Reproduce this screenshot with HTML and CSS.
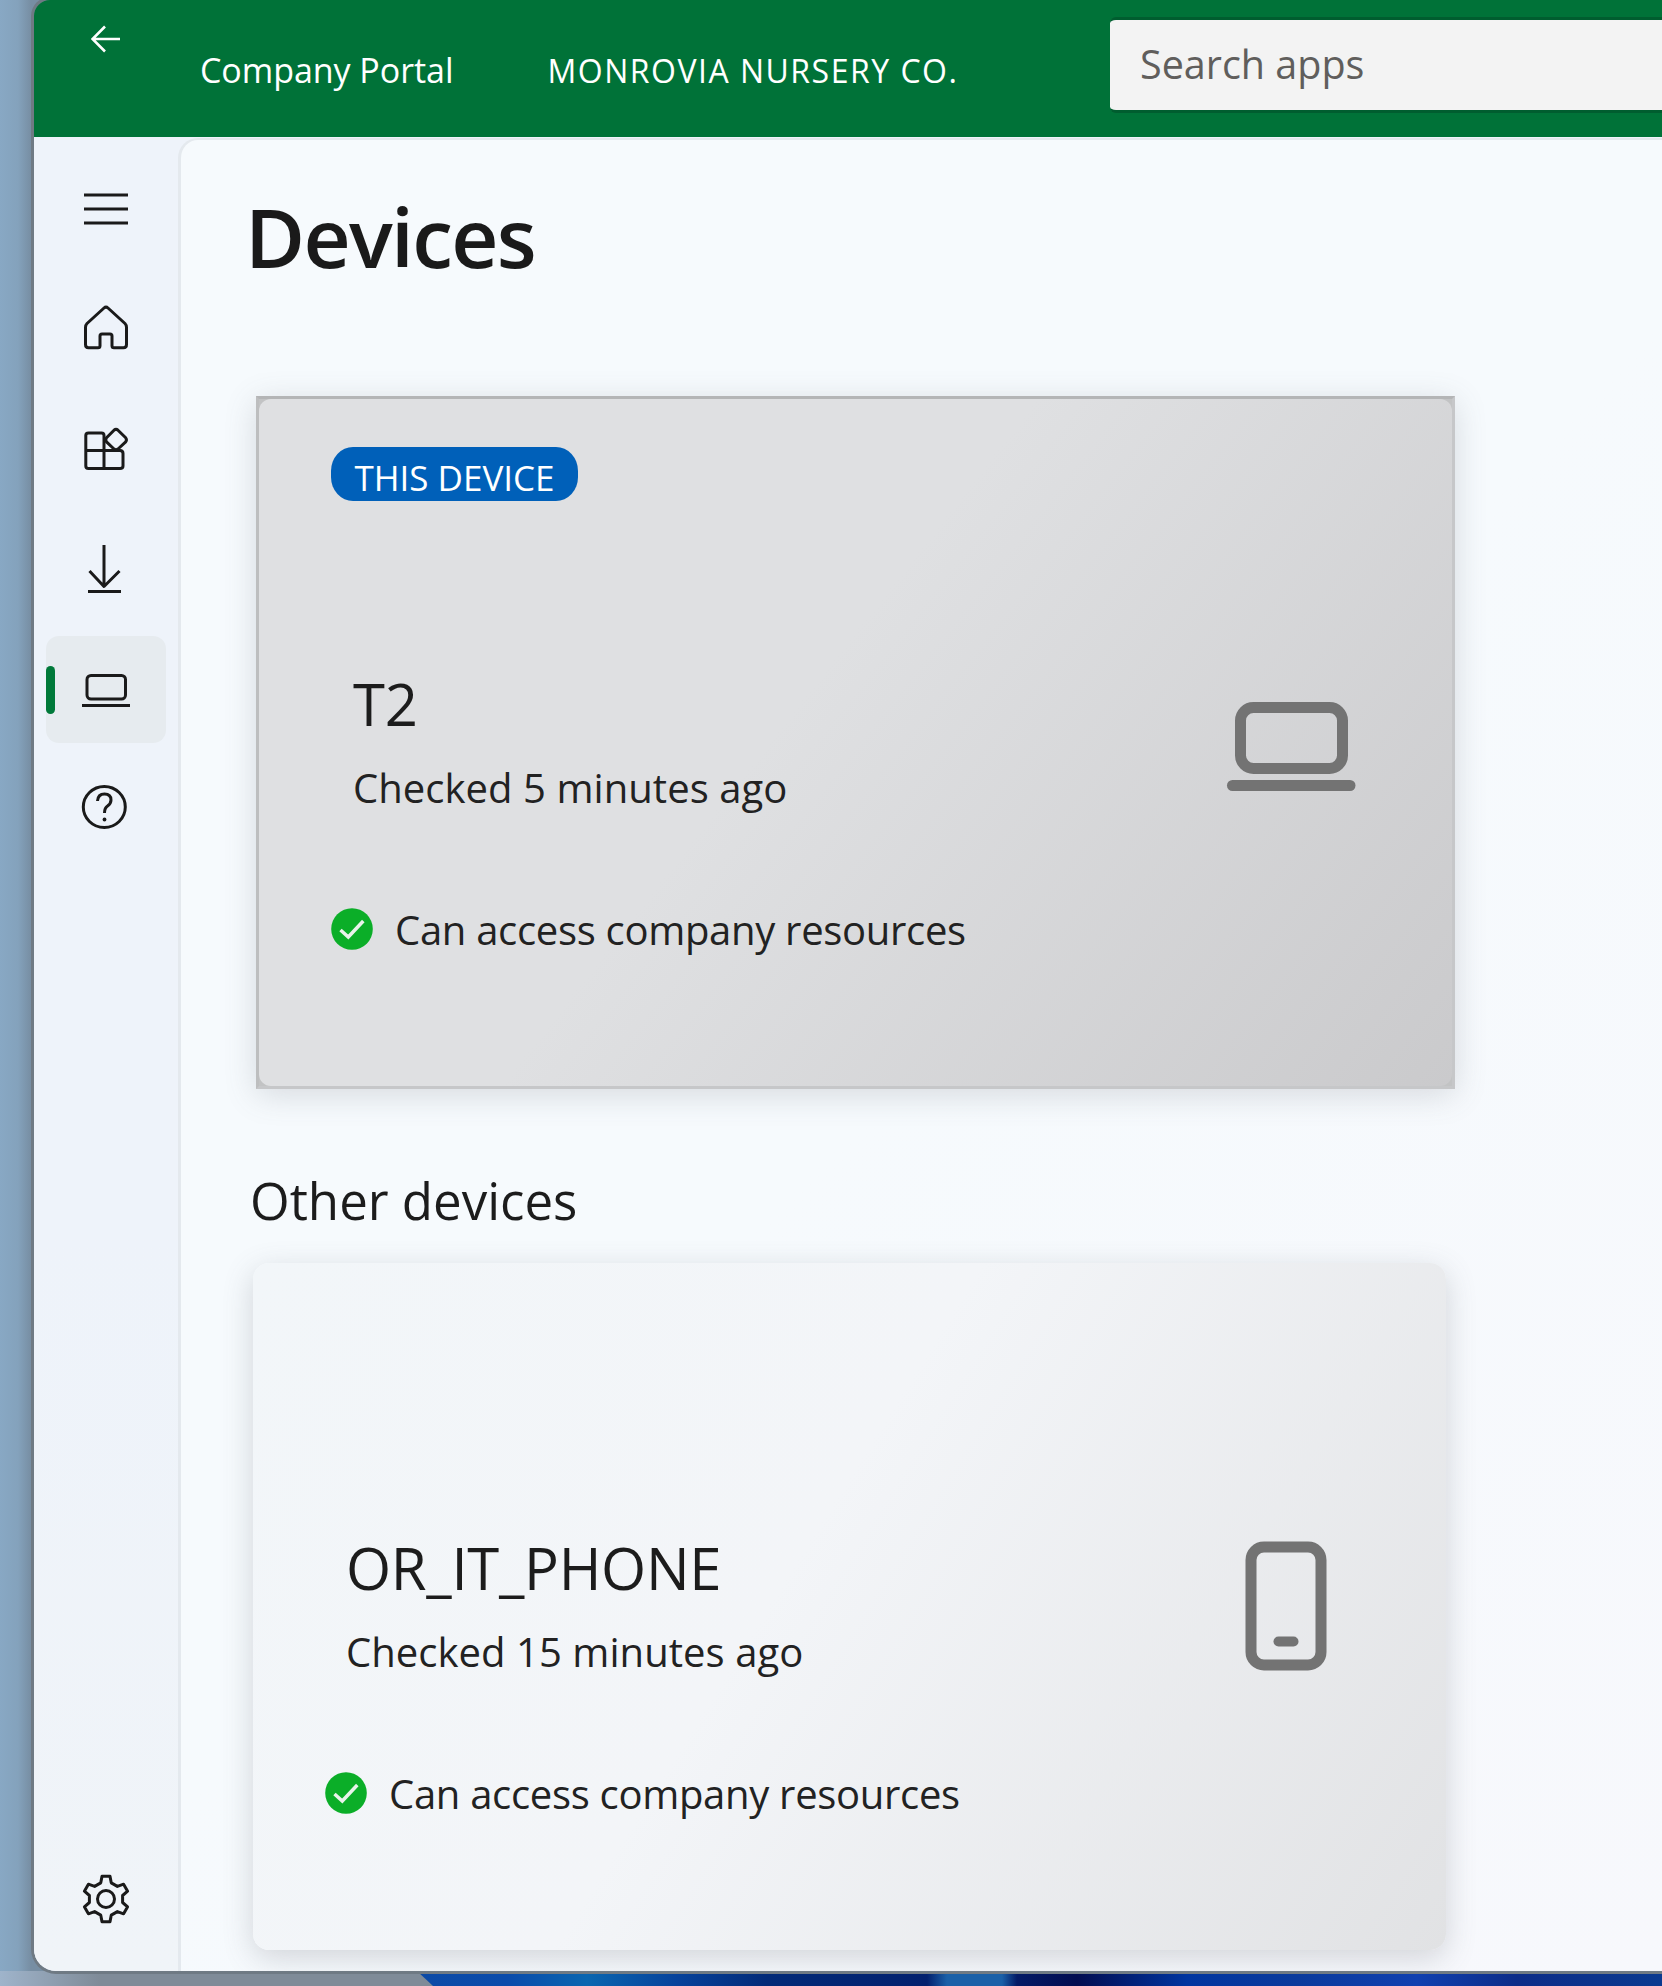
FILE: index.html
```html
<!DOCTYPE html>
<html lang="en">
<head>
<meta charset="utf-8">
<title>Company Portal - Devices</title>
<link rel="stylesheet" href="styles.css">
</head>
<body>
<div class="desktop">
  <div class="window">
    <header class="topbar">
      <svg class="back" viewBox="0 0 30 28"><path d="M29 14H2M14 1.5 1.5 14 14 26.5"/></svg>
      <span class="app-name">Company Portal</span>
      <span class="org-name">MONROVIA NURSERY CO.</span>
      <div class="search"><span class="search-text">Search apps</span></div>
    </header>
    <div class="body-row">
      <nav class="nav">
        <a class="nav-item"><svg class="nav-icon" viewBox="0 0 48 48"><path d="M2 10h44M2 24h44M2 38h44"/></svg></a>
        <a class="nav-item"><svg class="nav-icon" viewBox="0 0 48 48"><path d="M22 3Q24 1.200 26 3L43 18.500Q44.500 20 44.500 22.500V39.500Q44.500 42.800 41.500 42.800H32Q30 42.800 30 40.800V31Q30 29 28 29H20Q18 29 18 31V40.800Q18 42.800 16 42.800H6.500Q3.500 42.800 3.500 39.500V22.500Q3.500 20 5 18.500Z"/></svg></a>
        <a class="nav-item"><svg class="nav-icon" viewBox="0 0 48 48"><path d="M22 25.500V10.500Q22 8 19.500 8H6.500Q3.800 8 3.800 10.500V41Q3.800 43.500 6.500 43.500H38Q41 43.500 41 41V28.500Q41 25.500 38 25.500H3.800M22 25.500V43.500"/><path d="M32 5.200Q34 3.500 36 5.200L43.700 12.800Q45.200 14.800 43.700 16.800L36 24Q34 25.700 32 24L24.500 16.800Q23 14.800 24.500 12.800Z"/></svg></a>
        <a class="nav-item"><svg class="nav-icon" viewBox="0 0 48 48"><path d="M22 0V41M7.500 26 22 41.500 37.500 26M6 46.500H39"/></svg></a>
        <a class="nav-item nav-active"><span class="nav-pill"></span><svg class="nav-icon" viewBox="0 0 48 48"><rect x="5" y="10.500" width="38.500" height="23.500" rx="4"/><path d="M0 40.500H48"/></svg></a>
        <a class="nav-item"><svg class="nav-icon" viewBox="0 0 48 48"><ellipse cx="22.300" cy="22" rx="21" ry="20.500"/><path d="M15.500 16Q16 9 22.500 9 29 9 29 15 29 18.500 25.500 21 22.500 23 22.500 28"/><circle class="dot" cx="22.500" cy="34.500" r="1.900"/></svg></a>
        <a class="nav-item nav-bottom"><svg class="nav-icon" viewBox="0 0 48 48"><path d="M18.750 7.830 20 1.350H28L29.250 7.830 35.400 11.400 41.600 9.200 45.600 16.130 40.600 20.500V27.500L45.600 31.870 41.600 38.800 35.400 36.600 29.250 40.170 28 46.650H20L18.750 40.170 12.600 36.600 6.400 38.800 2.400 31.870 7.400 27.500V20.500L2.400 16.130 6.400 9.200 12.600 11.400Z"/><circle cx="24" cy="24" r="8.500"/></svg></a>
      </nav>
      <main class="content">
        <h1 class="page-title">Devices</h1>
        <section class="card card-current">
          <span class="badge">THIS DEVICE</span>
          <div class="device-row device-row-current">
            <div class="device-text">
              <div class="device-name">T2</div>
              <div class="device-time">Checked 5 minutes ago</div>
            </div>
            <svg class="device-icon" viewBox="0 0 130 130"><rect x="14.500" y="26.500" width="102" height="61" rx="13"/><path d="M6.500 104.500H124"/></svg>
          </div>
          <div class="status status-current">
            <svg class="check" viewBox="0 0 42 42"><circle cx="21" cy="21" r="20.800"/><path d="M9.500 22 17.300 29 32.300 13"/></svg>
            <span class="status-text">Can access company resources</span>
          </div>
        </section>
        <h2 class="section-title">Other devices</h2>
        <section class="card card-other">
          <div class="device-row">
            <div class="device-text device-text-other">
              <div class="device-name">OR_IT_PHONE</div>
              <div class="device-time">Checked 15 minutes ago</div>
            </div>
            <svg class="device-icon device-icon-phone" viewBox="0 0 130 140"><rect x="30" y="7" width="70" height="118" rx="13"/><rect class="bar" x="52.500" y="96.500" width="25" height="10" rx="5"/></svg>
          </div>
          <div class="status status-other">
            <svg class="check" viewBox="0 0 42 42"><circle cx="21" cy="21" r="20.800"/><path d="M9.500 22 17.300 29 32.300 13"/></svg>
            <span class="status-text">Can access company resources</span>
          </div>
        </section>
      </main>
    </div>
  </div>
  <div class="wallpaper"><div class="wall-blue"></div></div>
</div>
</body>
</html>
```
FILE: styles.css
```css
* { box-sizing: border-box; }
html, body { margin: 0; padding: 0; }
body { font-family: "Open Sans", "Noto Sans", sans-serif; color: #1c1c1c; overflow: hidden; }
.desktop {
  width: 1662px; height: 1986px; overflow: hidden;
  display: flex; flex-direction: column;
  background: linear-gradient(90deg, #88a8c4 0, #84a2bc 18px, #778ea3 31px, #778ea3 34px);
}
.window {
  margin-left: 34px; height: 1971px; flex: none;
  display: flex; flex-direction: column;
  border-radius: 16px 0 0 22px;
  box-shadow: 0 0 0 3px #6f7a84;
  position: relative; z-index: 1;
  overflow: hidden;
}
.topbar {
  height: 137px; flex: none; background: #007238;
  display: flex; align-items: flex-start; color: #fff;
}
.back { width: 30px; height: 28px; margin: 25px 0 0 57px; flex: none; fill: none; stroke: #fff; stroke-width: 2.6; }
.app-name { font-size: 34px; line-height: 50px; margin: 45px 0 0 79px; white-space: nowrap; letter-spacing: -.05px; }
.org-name { font-size: 32px; line-height: 50px; margin: 46px 0 0 94px; white-space: nowrap; letter-spacing: 1.5px; }
.search {
  flex: none; width: 552px; height: 96px; margin: 17px 0 0 auto;
  background: #f3f3f3; border-top: 3px solid #005d2f; border-bottom: 3px solid #005d2f;
  border-radius: 6px 0 0 6px; padding: 0 0 2px 30px;
  display: flex; align-items: center;
}
.search-text { font-size: 39.500px; color: #605e5c; }
.body-row { flex: 1; display: flex; background: #eef3fa; min-height: 0; }
.nav {
  width: 144px; flex: none; padding: 18.500px 0 18.500px 12px;
  display: flex; flex-direction: column; gap: 13px;
  background: linear-gradient(180deg, #eef3fa 0, #eef3fa 60%, #f0f4f8 100%);
}
.nav-item {
  width: 120px; height: 107px; flex: none; position: relative;
  display: flex; align-items: center; justify-content: center; border-radius: 13px;
}
.nav-bottom { margin-top: auto; }
.nav-active { background: #e6ebef; }
.nav-pill { position: absolute; left: 0; top: 30px; width: 9px; height: 48px; border-radius: 5px; background: #00793a; }
.nav-icon { width: 48px; height: 48px; fill: none; stroke: #1a1a1a; stroke-width: 3; stroke-linejoin: round; overflow: visible; }
.nav-icon .dot { fill: #1a1a1a; stroke: none; }
.content {
  flex: 1; min-width: 0; background: #f6fafd; margin-top: 1px;
  border-left: 3px solid #e4e9ee; border-top: 2px solid #e4e9ee;
  border-top-left-radius: 20px; overflow: hidden;
  padding: 45px 0 0 0;
  background-image: linear-gradient(135deg, #f6fafd 50%, #f7f8fc 100%);
}
.page-title { margin: 0 0 0 64px; font-size: 82px; line-height: 102px; font-weight: 600; color: #1a1a1a; letter-spacing: -1.700px; }
.card { position: relative; }
.card-current {
  width: 1199px; height: 693px; margin: 109px 0 0 75px; isolation: isolate;
  border: 3px solid #c6c7c9; border-top-color: #b4b5b6; border-left-color: #bdbebf;
  background: #c2c3c4;
  box-shadow: 0 6px 30px rgba(90,95,105,.2);
  padding: 48px 0 0 72px;
}
.card-current::before {
  content: ""; position: absolute; inset: 0; z-index: -1; border-radius: 12px;
  background: linear-gradient(128deg, #dfe0e2 0, #dfe0e2 45%, #cacacc 100%);
}
.badge {
  display: inline-block; height: 54px; line-height: 62px; width: 247px; text-align: center;
  background: #0060b9; color: #fff; border-radius: 22px / 24px; font-size: 35px;
}
.device-row { display: flex; align-items: center; justify-content: space-between; height: 160px; }
.device-row-current { margin: 165px 0 0 22px; padding-right: 96px; }
.device-text { display: flex; flex-direction: column; }
.device-name { font-size: 58px; line-height: 84px; color: #1c1c1c; letter-spacing: -.3px; white-space: nowrap; }
.device-time { font-size: 40px; line-height: 84px; color: #222; white-space: nowrap; letter-spacing: .05px; }
.device-icon { width: 130px; height: 130px; flex: none; fill: none; stroke: #737373; stroke-width: 11; stroke-linecap: round; }
.device-icon-phone { height: 140px; }
.device-icon .bar { fill: #737373; stroke: none; }
.status { display: flex; align-items: center; gap: 22px; height: 42px; }
.status-current { margin-top: 82px; }
.status-other { margin-top: 82px; }
.check { width: 42px; height: 42px; flex: none; }
.check circle { fill: #0bae28; }
.check path { fill: none; stroke: #e9f3ea; stroke-width: 3.5; }
.status-text { font-size: 40px; color: #222; letter-spacing: -.3px; white-space: nowrap; }
.section-title { margin: 77px 0 0 69px; font-size: 51px; line-height: 68px; font-weight: 400; color: #1c1c1c; }
.card-other {
  width: 1193px; height: 687px; margin: 29px 0 0 72px; border-radius: 16px;
  background: linear-gradient(122deg, #f2f6f9 0, #f3f5f8 45%, #e1e2e4 100%);
  box-shadow: 0 8px 30px rgba(90,95,105,.24);
  padding: 267px 95px 0 72px;
}
.device-text-other { margin-left: 21px; }
.wallpaper {
  flex: 1; display: flex; padding-left: 417px;
  background: linear-gradient(90deg, #9fb4cb 0, #7f8b98 100px, #7f8b98 100%);
}
.wall-blue {
  flex: 1; clip-path: polygon(0 0, 100% 0, 100% 100%, 16px 100%);
  background: linear-gradient(90deg, #0c4aa6 0, #0a4bab 90px, #0a66b0 170px, #06429b 260px, #022a78 350px, #02206e 510px, #1a60a8 530px, #1a60a8 585px, #031a66 600px, #020c50 660px, #0035a0 770px, #0a3a9c 880px, #1040b0 1000px, #0c2c88 1100px, #0a3a90 1245px);
}
```
